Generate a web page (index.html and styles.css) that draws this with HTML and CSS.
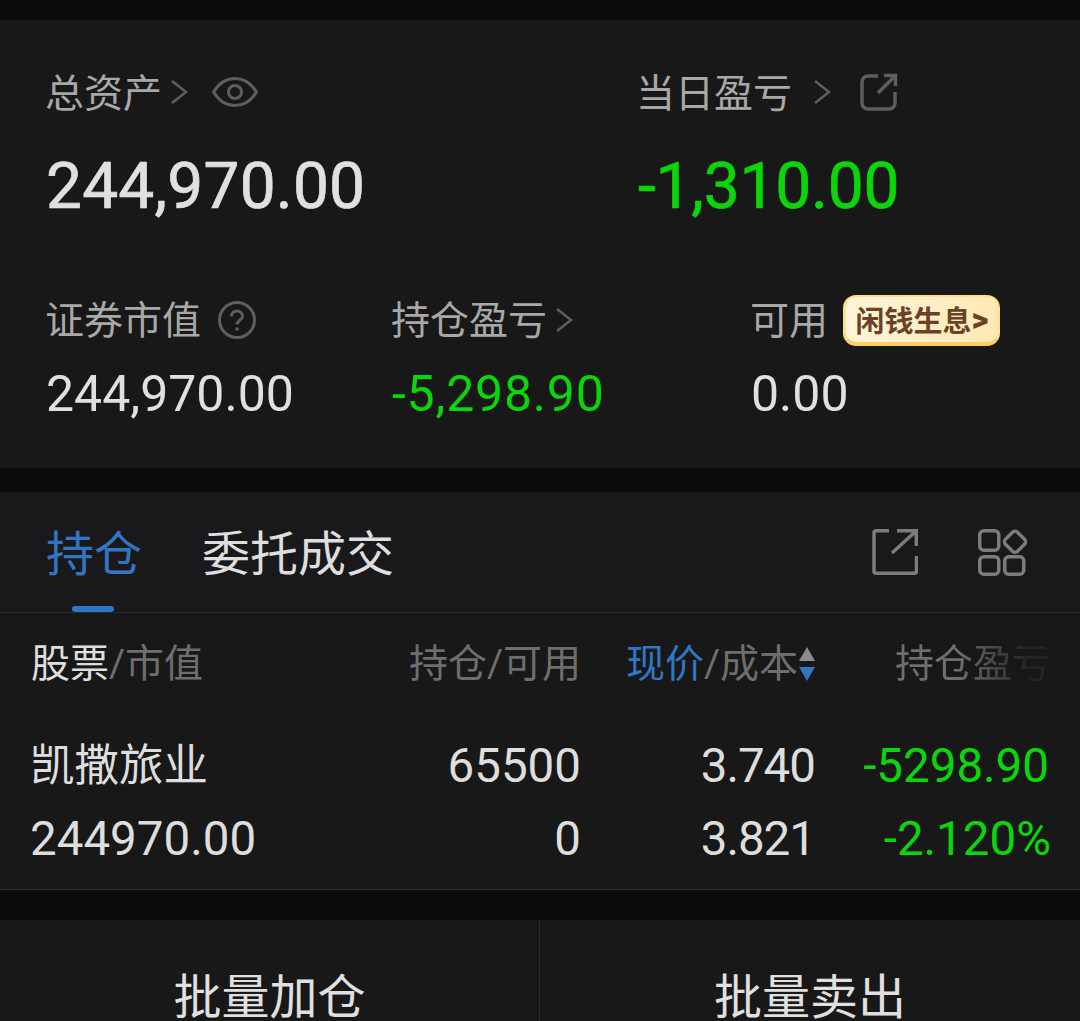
FILE: index.html
```html
<!DOCTYPE html>
<html lang="zh-CN">
<head>
	<meta charset="UTF-8">
	<meta name="viewport" content="width=device-width, initial-scale=1.0">
	<title>持仓</title>
	<link rel="stylesheet" href="styles.css">
</head>
<body>
	<section class="summary">
		<div class="summary-top">
			<div>
				<div class="label-row">
					<span class="label">总资产</span>
					<svg class="chevron" width="18" height="26" viewBox="0 0 18 26"><path d="M2 2l14 11L2 24"/></svg>
					<svg class="eye" width="46" height="32" viewBox="0 0 46 32"><path d="M1.5 16C7 7 14 2.5 23 2.5S39 7 44.500 16C39 25 32 29.500 23 29.500S7 25 1.500 16z"/><circle cx="23" cy="16" r="6.500"/></svg>
				</div>
				<div class="big-num">244,970.00</div>
			</div>
			<div>
				<div class="label-row">
					<span class="label">当日盈亏</span>
					<svg class="chevron chevron-day" width="18" height="26" viewBox="0 0 18 26"><path d="M2 2l14 11L2 24"/></svg>
					<svg class="share-small" width="38" height="38" viewBox="0 0 38 38"><path d="M18 3H8a6 6 0 0 0-6 6v21a6 6 0 0 0 6 6h21a6 6 0 0 0 6-6V19"/><path d="M18 20L35 3M24 2.500h11.500V13"/></svg>
				</div>
				<div class="big-num big-green">-1,310.00</div>
			</div>
		</div>
		<div class="summary-bottom">
			<div>
				<div class="label-row">
					<span class="label">证券市值</span>
					<svg class="help" width="38" height="38" viewBox="0 0 38 38"><circle cx="19" cy="19" r="17.500"/><path d="M13.500 15.500c0-3.500 2.500-5.500 5.500-5.500s5.500 2 5.500 5c0 4-5.500 4.500-5.500 8.500"/><circle class="help-dot" cx="19" cy="28" r="1.800"/></svg>
				</div>
				<div class="mid-num">244,970.00</div>
			</div>
			<div>
				<div class="label-row">
					<span class="label">持仓盈亏</span>
					<svg class="chevron chevron-hold" width="18" height="26" viewBox="0 0 18 26"><path d="M2 2l14 11L2 24"/></svg>
				</div>
				<div class="mid-num mid-green">-5,298.90</div>
			</div>
			<div>
				<div class="label-row">
					<span class="label">可用</span>
					<span class="badge">闲钱生息<span class="badge-arrow">&gt;</span></span>
				</div>
				<div class="mid-num">0.00</div>
			</div>
		</div>
	</section>

	<section class="holdings">
		<div class="tabs">
			<div class="tab tab-active">持仓<span class="tab-line"></span></div>
			<div class="tab">委托成交</div>
			<div class="tab-icons">
				<svg class="icon" width="46" height="46" viewBox="0 0 46 46"><path d="M17 1.750H4a2 2 0 0 0-2 2v38.500a2 2 0 0 0 2 2h38.500a2 2 0 0 0 2-2V27"/><path d="M20 24L43 3M25 1.750h19.250V17"/></svg>
				<svg class="icon" width="50" height="48" viewBox="0 0 50 48"><rect x="1.750" y="1.750" width="19" height="19.500" rx="4"/><rect x="1.750" y="27.750" width="19" height="17.500" rx="4"/><rect x="26.750" y="27.750" width="19" height="17.500" rx="4"/><rect x="28.500" y="4.200" width="17" height="17" rx="3.500" transform="rotate(45 37 12.700)"/></svg>
			</div>
		</div>
		<div class="table-row table-head">
			<div><span class="head-strong">股票</span>/市值</div>
			<div class="right">持仓/可用</div>
			<div class="right sort-cell">
				<span class="head-blue">现价</span>/成本<span class="sort"><i class="sort-up"></i><i class="sort-down"></i></span>
			</div>
			<div class="right head-fade">持仓盈亏</div>
		</div>
		<div class="table-row stock-top">
			<div class="stock-first stock-name">凯撒旅业</div>
			<div class="right">65500</div>
			<div class="right price">3.740</div>
			<div class="right green">-5298.90</div>
		</div>
		<div class="table-row stock-bottom">
			<div class="stock-first">244970.00</div>
			<div class="right">0</div>
			<div class="right price">3.821</div>
			<div class="right green pct">-2.120%</div>
		</div>
	</section>

	<section class="actions">
		<div class="action">批量加仓</div>
		<div class="action">批量卖出</div>
	</section>
</body>
</html>
```

FILE: styles.css
```css
* {
	box-sizing: border-box;
}

html,
body {
	height: 100%;
}

body {
	margin: 0;
	padding-top: 20px;
	height: 1021px;
	overflow: hidden;
	background: #0b0b0b;
	color: #e0e0e0;
	font-family: Roboto, "Noto Sans CJK SC", sans-serif;
}

.summary {
	height: 448px;
	padding: 47px 0 0 46px;
	background: #181818;
}

.summary-top {
	display: grid;
	grid-template-columns: 591px 1fr;
}

.summary-bottom {
	display: grid;
	grid-template-columns: 346px 359px 1fr;
	margin-top: 71px;
}

.label-row {
	display: flex;
	align-items: center;
	height: 50px;
}

.label {
	margin-left: -1px;
	padding-top: 3px;
	font-size: 39px;
	line-height: 50px;
	color: #a8a8a8;
}

.summary-bottom .label {
	padding-top: 2px;
}

.chevron {
	margin-left: 8px;
	fill: none;
	stroke: #5e5e5e;
	stroke-width: 2.500;
}

.chevron-day {
	margin-left: 21px;
}

.eye {
	margin-left: 24px;
	fill: none;
	stroke: #5e5e5e;
	stroke-width: 3;
}

.share-small {
	margin-left: 29px;
	fill: none;
	stroke: #5e5e5e;
	stroke-width: 3.500;
}

.help {
	margin-left: 17px;
	fill: none;
	stroke: #5e5e5e;
	stroke-width: 3;
}

.help-dot {
	fill: #5e5e5e;
	stroke: none;
}

.big-num {
	margin-top: 33px;
	font-size: 64px;
	line-height: 74px;
	letter-spacing: 0.2px;
	-webkit-text-stroke: 0.7px currentColor;
	color: #e0e0e0;
}

.big-green {
	margin-left: 1px;
	letter-spacing: -0.2px;
	color: #0ad60a;
}

.mid-num {
	margin-top: 20px;
	font-size: 50px;
	line-height: 58px;
	color: #e0e0e0;
}

.mid-green {
	letter-spacing: 0.8px;
	color: #0ad60a;
}

.green {
	color: #0ad60a;
}

.pct {
	margin-right: -2px;
}

.badge {
	display: flex;
	align-items: center;
	justify-content: center;
	width: 157px;
	height: 51px;
	margin-left: 15px;
	border: 2px solid #ffe08a;
	border-bottom: 4px solid #ffcf63;
	border-left-width: 3px;
	border-radius: 13px;
	background: linear-gradient(100deg, #fff5dc, #ffe8b4);
	color: #6b4226;
	font-size: 29px;
	font-weight: 700;
	white-space: nowrap;
}

.badge-arrow {
	font-size: 33px;
	font-weight: 900;
	line-height: 1;
}

.holdings {
	height: 398px;
	margin-top: 24px;
	border-bottom: 1px solid #2a2a2a;
	background: #181818;
}

.tabs {
	display: flex;
	height: 121px;
	padding: 36px 0 0 46px;
	border-bottom: 1px solid #2a2a2b;
	background: #19191c;
}

.tab {
	position: relative;
	height: 84px;
	margin-right: 60px;
	padding-top: 1px;
	font-size: 48px;
	line-height: 52px;
	color: #dedede;
}

.tab-active {
	color: #3176c4;
}

.tab-line {
	position: absolute;
	left: 26px;
	bottom: 0;
	width: 42px;
	height: 6px;
	border-radius: 3px;
	background: #3176c4;
}

.tab-icons {
	display: flex;
	align-items: flex-start;
	gap: 60px;
	margin: 1px 0 0 418px;
}

.icon {
	fill: none;
	stroke: #7c7c7c;
	stroke-width: 3.500;
}

.table-row {
	display: grid;
	grid-template-columns: 350px 200px 235px 233px;
	padding-left: 31px;
}

.right {
	text-align: right;
}

.table-head {
	height: 100px;
	padding-top: 25px;
	font-size: 39px;
	line-height: 52px;
	white-space: nowrap;
	color: #6e6e6e;
}

.head-strong {
	color: #dedede;
}

.head-blue {
	color: #3176c4;
}

.sort-cell {
	display: flex;
	justify-content: flex-end;
	align-items: center;
	height: 52px;
	margin-right: 1px;
}

.sort {
	display: flex;
	flex-direction: column;
	gap: 6px;
	margin-left: 1px;
}

.sort i {
	display: block;
	width: 0;
	height: 0;
	border-left: 8px solid transparent;
	border-right: 8px solid transparent;
}

.sort-up {
	border-bottom: 14px solid #8c8c8c;
}

.sort-down {
	border-top: 14px solid #3176c4;
}

.head-fade {
	margin-right: -2px;
	-webkit-mask-image: linear-gradient(90deg, #000 60%, rgba(0, 0, 0, 0.15) 90%);
	mask-image: linear-gradient(90deg, #000 60%, rgba(0, 0, 0, 0.15) 90%);
}

.stock-top,
.stock-bottom {
	font-size: 47.500px;
	line-height: 74px;
	color: #dedede;
}

.stock-top {
	height: 73px;
	margin-top: 16px;
}

.stock-first {
	margin-left: -1px;
}

.stock-name {
	font-size: 44.500px;
}

.price {
	margin-right: 1px;
	letter-spacing: -1px;
}

.actions {
	display: grid;
	grid-template-columns: 539px 1fr;
	height: 101px;
	margin-top: 30px;
	background: #181818;
}

.action {
	padding-top: 45px;
	font-size: 48px;
	line-height: 66px;
	text-align: center;
	color: #e0e0e0;
}

.action + .action {
	border-left: 1px solid #2a2a2a;
}
```
